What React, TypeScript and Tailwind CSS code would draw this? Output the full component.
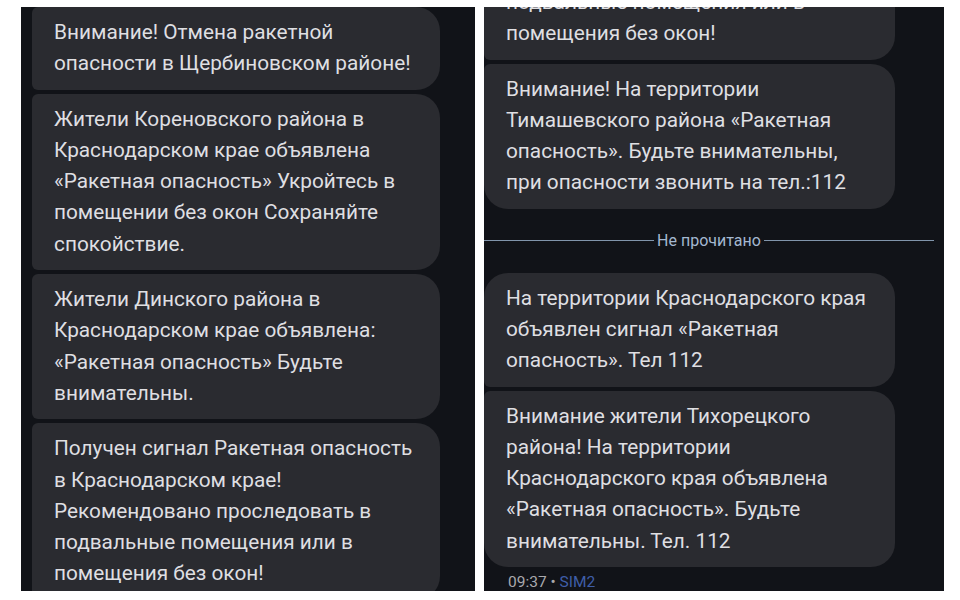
import React from 'react';

type Msg = { lines: string[]; tl?: boolean; bl?: boolean };

const leftMsgs: Msg[] = [
  { lines: ['Внимание! Отмена ракетной', 'опасности в Щербиновском районе!'] },
  {
    lines: [
      'Жители Кореновского района в',
      'Краснодарском крае объявлена',
      '«Ракетная опасность» Укройтесь в',
      'помещении без окон Сохраняйте',
      'спокойствие.',
    ],
  },
  {
    lines: [
      'Жители Динского района в',
      'Краснодарском крае объявлена:',
      '«Ракетная опасность» Будьте',
      'внимательны.',
    ],
  },
  {
    lines: [
      'Получен сигнал Ракетная опасность',
      'в Краснодарском крае!',
      'Рекомендовано проследовать в',
      'подвальные помещения или в',
      'помещения без окон!',
    ],
  },
];

function Bubble({ lines, tl, bl, className = '' }: Msg & { className?: string }) {
  return (
    <div
      className={`bg-[#2a2b30] px-[22px] py-[10px] rounded-r-[24px] ${tl ? 'rounded-tl-[24px]' : 'rounded-tl-[6px]'} ${
        bl ? 'rounded-bl-[24px]' : 'rounded-bl-[6px]'
      } ${className}`}
    >
      {lines.map((l, i) => (
        <div key={i} className="whitespace-nowrap text-[20.8px] leading-[31.3px] text-[#dfdfe2]">
          {l}
        </div>
      ))}
    </div>
  );
}

export default function App() {
  return (
    <div
      className="flex h-[600px] w-[960px] bg-white pl-[21px] pt-[7px]"
      style={{ fontFamily: 'Roboto, "Noto Sans", sans-serif' }}
    >
      {/* left screenshot */}
      <div className="flex h-[584px] w-[454px] flex-col gap-[4px] overflow-hidden bg-[#111318] pl-[11px]">
        {leftMsgs.map((m, i) => (
          <Bubble key={i} {...m} className="w-[408px]" />
        ))}
      </div>

      {/* right screenshot */}
      <div className="ml-[9px] flex h-[584px] w-[460px] flex-col overflow-hidden bg-[#111318]">
        <div className="flex flex-col gap-[4px]">
          <Bubble
            lines={['подвальные помещения или в', 'помещения без окон!']}
            className="-mt-[30px] w-[411px]"
          />
          <Bubble
            lines={[
              'Внимание! На территории',
              'Тимашевского района «Ракетная',
              'опасность». Будьте внимательны,',
              'при опасности звонить на тел.:112',
            ]}
            bl
            className="w-[411px]"
          />
        </div>

        <div className="flex h-[66px] items-center pr-[10px]">
          <div className="h-[1.5px] flex-1 bg-[#8195ab]" />
          <span className="px-[3px] text-[16px] text-[#a4b8d0]">Не прочитано</span>
          <div className="h-[1.5px] flex-1 bg-[#8195ab]" />
        </div>

        <div className="flex flex-col gap-[4px]">
          <Bubble
            lines={['На территории Краснодарского края', 'объявлен сигнал «Ракетная', 'опасность». Тел 112']}
            tl
            className="w-[411px]"
          />
          <Bubble
            lines={[
              'Внимание жители Тихорецкого',
              'района! На территории',
              'Краснодарского края объявлена',
              '«Ракетная опасность». Будьте',
              'внимательны. Тел. 112',
            ]}
            bl
            className="w-[411px]"
          />
        </div>

        <div className="mt-[6px] pl-[24px] text-[15.5px] leading-[18px] text-[#a9a9ad]">
          09:37 • <span className="text-[#3f5ea8]">SIM2</span>
        </div>
      </div>
    </div>
  );
}
